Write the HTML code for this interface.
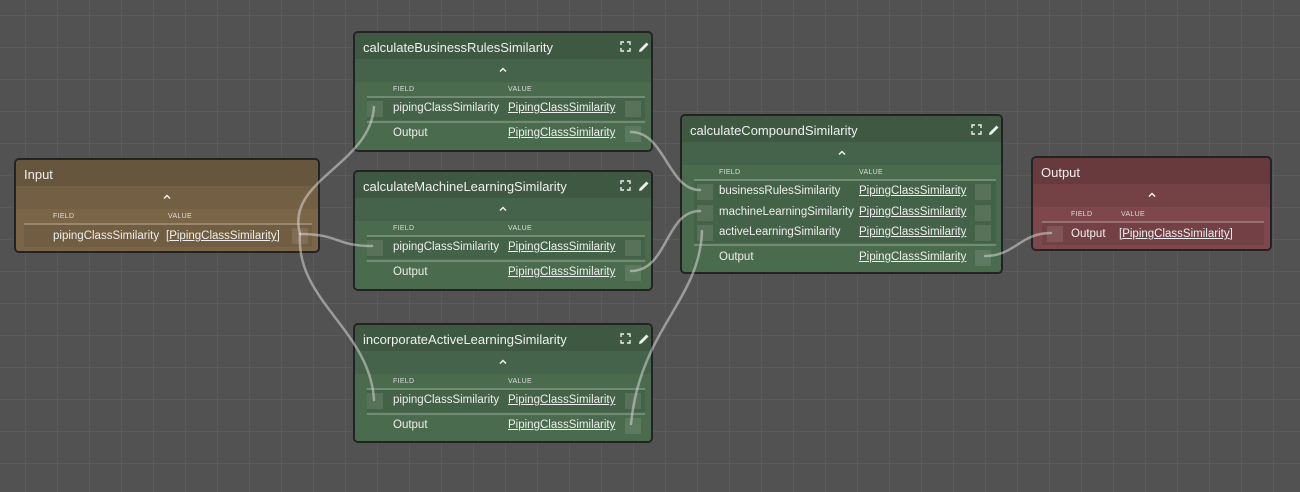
<!DOCTYPE html>
<html><head><meta charset="utf-8"><style>
*{margin:0;padding:0;box-sizing:border-box}
body{width:1300px;height:492px;overflow:hidden;background-color:#525252;
background-image:linear-gradient(to right,#5a5a5a 1px,transparent 1px),linear-gradient(to bottom,#5a5a5a 1px,transparent 1px);
background-size:32px 32px;background-position:25px 15px;font-family:"Liberation Sans",sans-serif;color:#e8e8e8;position:relative}
.n{position:absolute;border:2px solid #232323;border-radius:5px;overflow:hidden}
.n .h{position:absolute;left:0;right:0;top:0;height:26px}
.n .c{position:absolute;left:0;right:0;top:26px;height:23px}
.n .b{position:absolute;left:0;right:0;top:49px;bottom:0}
.t{position:absolute;left:8px;top:7px;font-size:13px;color:#f0f0f0;white-space:nowrap}
.chev{position:absolute;left:50%;top:34px;margin-left:-4px}
.lbl{position:absolute;top:53px;font-size:7px;color:#ddd;letter-spacing:.3px}
.ln{position:absolute;height:2px;background:rgba(255,255,255,.22)}
.row{position:absolute;height:22px;background:rgba(0,0,0,.08)}
.tx{position:absolute;font-size:11.5px;white-space:nowrap;color:#eee;line-height:14px}
.v{text-decoration:underline}
.p{position:absolute;width:16px;height:16px;background:rgba(255,255,255,.1)}
.g .h{background:#3e5842}.g .c{background:#45634a}.g .b{background:#4a6b4e}
.y .h{background:#67563e}.y .c{background:#735f43}.y .b{background:#7b6547}
.r .h{background:#683a3e}.r .c{background:#744145}.r .b{background:#7d474b}
.ic{position:absolute;top:8px}
svg.w{position:absolute;left:0;top:0}
</style></head><body>

<!-- Input -->
<div class="n y" style="left:14px;top:158px;width:306px;height:95px">
<div class="h"></div><div class="c"></div><div class="b"></div>
<div class="t">Input</div><svg class="chev" width="8" height="5" viewBox="0 0 8 5"><path d="M1 4.5L4 1.5 7 4.5" fill="none" stroke="#eee" stroke-width="1.5"/></svg>
<div class="lbl" style="left:37px">FIELD</div><div class="lbl" style="left:152px">VALUE</div>
<div class="ln" style="left:8px;width:288px;top:63px"></div>
<div class="row" style="left:8px;width:288px;top:65px"></div>
<div class="tx" style="left:37px;top:69px">pipingClassSimilarity</div>
<div class="tx" style="left:150px;top:69px">[<span class="v">PipingClassSimilarity</span>]</div>
<div class="p" style="left:276px;top:68px"></div>
</div>

<!-- green nodes -->
<div class="n g" style="left:353px;top:31px;width:300px;height:121px">
<div class="h"></div><div class="c"></div><div class="b"></div>
<div class="t">calculateBusinessRulesSimilarity</div><svg class="chev" width="8" height="5" viewBox="0 0 8 5"><path d="M1 4.5L4 1.5 7 4.5" fill="none" stroke="#eee" stroke-width="1.5"/></svg>
<svg class="ic" style="left:265px" width="11" height="11" viewBox="0 0 11 11" fill="none" stroke="#eee" stroke-width="1.4"><path d="M1 4V1H4M7 1H10V4M10 7V10H7M4 10H1V7"/></svg>
<svg class="ic" style="left:283px" width="12" height="12" viewBox="0 0 12 12"><path d="M1 11L1.5 8.5 8.5 1.5 10.5 3.5 3.5 10.5Z" fill="#eee"/></svg>
<div class="lbl" style="left:38px">FIELD</div><div class="lbl" style="left:153px">VALUE</div>
<div class="ln" style="left:12px;width:278px;top:63px"></div>
<div class="row" style="left:12px;width:278px;top:65px"></div>
<div class="p" style="left:12px;top:68px"></div>
<div class="tx" style="left:38px;top:68px">pipingClassSimilarity</div>
<div class="tx v" style="left:153px;top:68px">PipingClassSimilarity</div>
<div class="p" style="left:270px;top:68px"></div>
<div class="ln" style="left:12px;width:278px;top:88px"></div>
<div class="tx" style="left:38px;top:93px">Output</div>
<div class="tx v" style="left:153px;top:93px">PipingClassSimilarity</div>
<div class="p" style="left:270px;top:93px"></div>
</div>

<div class="n g" style="left:353px;top:170px;width:300px;height:121px">
<div class="h"></div><div class="c"></div><div class="b"></div>
<div class="t">calculateMachineLearningSimilarity</div><svg class="chev" width="8" height="5" viewBox="0 0 8 5"><path d="M1 4.5L4 1.5 7 4.5" fill="none" stroke="#eee" stroke-width="1.5"/></svg>
<svg class="ic" style="left:265px" width="11" height="11" viewBox="0 0 11 11" fill="none" stroke="#eee" stroke-width="1.4"><path d="M1 4V1H4M7 1H10V4M10 7V10H7M4 10H1V7"/></svg>
<svg class="ic" style="left:283px" width="12" height="12" viewBox="0 0 12 12"><path d="M1 11L1.5 8.5 8.5 1.5 10.5 3.5 3.5 10.5Z" fill="#eee"/></svg>
<div class="lbl" style="left:38px">FIELD</div><div class="lbl" style="left:153px">VALUE</div>
<div class="ln" style="left:12px;width:278px;top:63px"></div>
<div class="row" style="left:12px;width:278px;top:65px"></div>
<div class="p" style="left:12px;top:68px"></div>
<div class="tx" style="left:38px;top:68px">pipingClassSimilarity</div>
<div class="tx v" style="left:153px;top:68px">PipingClassSimilarity</div>
<div class="p" style="left:270px;top:68px"></div>
<div class="ln" style="left:12px;width:278px;top:88px"></div>
<div class="tx" style="left:38px;top:93px">Output</div>
<div class="tx v" style="left:153px;top:93px">PipingClassSimilarity</div>
<div class="p" style="left:270px;top:93px"></div>
</div>

<div class="n g" style="left:353px;top:323px;width:300px;height:120px">
<div class="h"></div><div class="c"></div><div class="b"></div>
<div class="t">incorporateActiveLearningSimilarity</div><svg class="chev" width="8" height="5" viewBox="0 0 8 5"><path d="M1 4.5L4 1.5 7 4.5" fill="none" stroke="#eee" stroke-width="1.5"/></svg>
<svg class="ic" style="left:265px" width="11" height="11" viewBox="0 0 11 11" fill="none" stroke="#eee" stroke-width="1.4"><path d="M1 4V1H4M7 1H10V4M10 7V10H7M4 10H1V7"/></svg>
<svg class="ic" style="left:283px" width="12" height="12" viewBox="0 0 12 12"><path d="M1 11L1.5 8.5 8.5 1.5 10.5 3.5 3.5 10.5Z" fill="#eee"/></svg>
<div class="lbl" style="left:38px">FIELD</div><div class="lbl" style="left:153px">VALUE</div>
<div class="ln" style="left:12px;width:278px;top:63px"></div>
<div class="row" style="left:12px;width:278px;top:65px"></div>
<div class="p" style="left:12px;top:68px"></div>
<div class="tx" style="left:38px;top:68px">pipingClassSimilarity</div>
<div class="tx v" style="left:153px;top:68px">PipingClassSimilarity</div>
<div class="p" style="left:270px;top:68px"></div>
<div class="ln" style="left:12px;width:278px;top:88px"></div>
<div class="tx" style="left:38px;top:93px">Output</div>
<div class="tx v" style="left:153px;top:93px">PipingClassSimilarity</div>
<div class="p" style="left:270px;top:93px"></div>
</div>

<!-- Compound -->
<div class="n g" style="left:680px;top:114px;width:323px;height:160px">
<div class="h"></div><div class="c"></div><div class="b"></div>
<div class="t">calculateCompoundSimilarity</div><svg class="chev" width="8" height="5" viewBox="0 0 8 5"><path d="M1 4.5L4 1.5 7 4.5" fill="none" stroke="#eee" stroke-width="1.5"/></svg>
<svg class="ic" style="left:289px" width="11" height="11" viewBox="0 0 11 11" fill="none" stroke="#eee" stroke-width="1.4"><path d="M1 4V1H4M7 1H10V4M10 7V10H7M4 10H1V7"/></svg>
<svg class="ic" style="left:306px" width="12" height="12" viewBox="0 0 12 12"><path d="M1 11L1.5 8.5 8.5 1.5 10.5 3.5 3.5 10.5Z" fill="#eee"/></svg>
<div class="lbl" style="left:37px">FIELD</div><div class="lbl" style="left:177px">VALUE</div>
<div class="ln" style="left:12px;width:302px;top:63px"></div>
<div class="row" style="left:12px;width:302px;top:65px;height:62px"></div>
<div class="p" style="left:15px;top:68px"></div><div class="p" style="left:15px;top:89px"></div><div class="p" style="left:15px;top:109px"></div>
<div class="tx" style="left:37px;top:68px">businessRulesSimilarity</div>
<div class="tx" style="left:37px;top:89px">machineLearningSimilarity</div>
<div class="tx" style="left:37px;top:109px">activeLearningSimilarity</div>
<div class="tx v" style="left:177px;top:68px">PipingClassSimilarity</div>
<div class="tx v" style="left:177px;top:89px">PipingClassSimilarity</div>
<div class="tx v" style="left:177px;top:109px">PipingClassSimilarity</div>
<div class="p" style="left:293px;top:68px"></div><div class="p" style="left:293px;top:89px"></div><div class="p" style="left:293px;top:109px"></div>
<div class="ln" style="left:12px;width:302px;top:128px"></div>
<div class="tx" style="left:37px;top:134px">Output</div>
<div class="tx v" style="left:177px;top:134px">PipingClassSimilarity</div>
<div class="p" style="left:293px;top:134px"></div>
</div>

<!-- Output -->
<div class="n r" style="left:1031px;top:156px;width:241px;height:95px">
<div class="h"></div><div class="c"></div><div class="b"></div>
<div class="t">Output</div><svg class="chev" width="8" height="5" viewBox="0 0 8 5"><path d="M1 4.5L4 1.5 7 4.5" fill="none" stroke="#eee" stroke-width="1.5"/></svg>
<div class="lbl" style="left:38px">FIELD</div><div class="lbl" style="left:88px">VALUE</div>
<div class="ln" style="left:9px;width:222px;top:63px"></div>
<div class="row" style="left:9px;width:222px;top:65px"></div>
<div class="p" style="left:14px;top:68px"></div>
<div class="tx" style="left:38px;top:69px">Output</div>
<div class="tx" style="left:86px;top:69px">[<span class="v">PipingClassSimilarity</span>]</div>
</div>

<svg class="w" width="1300" height="492" fill="none" stroke="rgba(215,215,215,0.55)" stroke-width="2.5" stroke-linecap="round">
<path d="M300,234 C285,180 370,165 374,107"/>
<path d="M300,234 C340,234 335,246 372,246"/>
<path d="M300,234 C295,300 370,330 374,400"/>
<path d="M631,132 C665,132 668,190 700,190"/>
<path d="M631,271 C668,271 665,211 700,211"/>
<path d="M631,424 C640,330 700,300 702,231"/>
<path d="M985,256 C1015,256 1020,233 1051,233"/>
</svg>
</body></html>
